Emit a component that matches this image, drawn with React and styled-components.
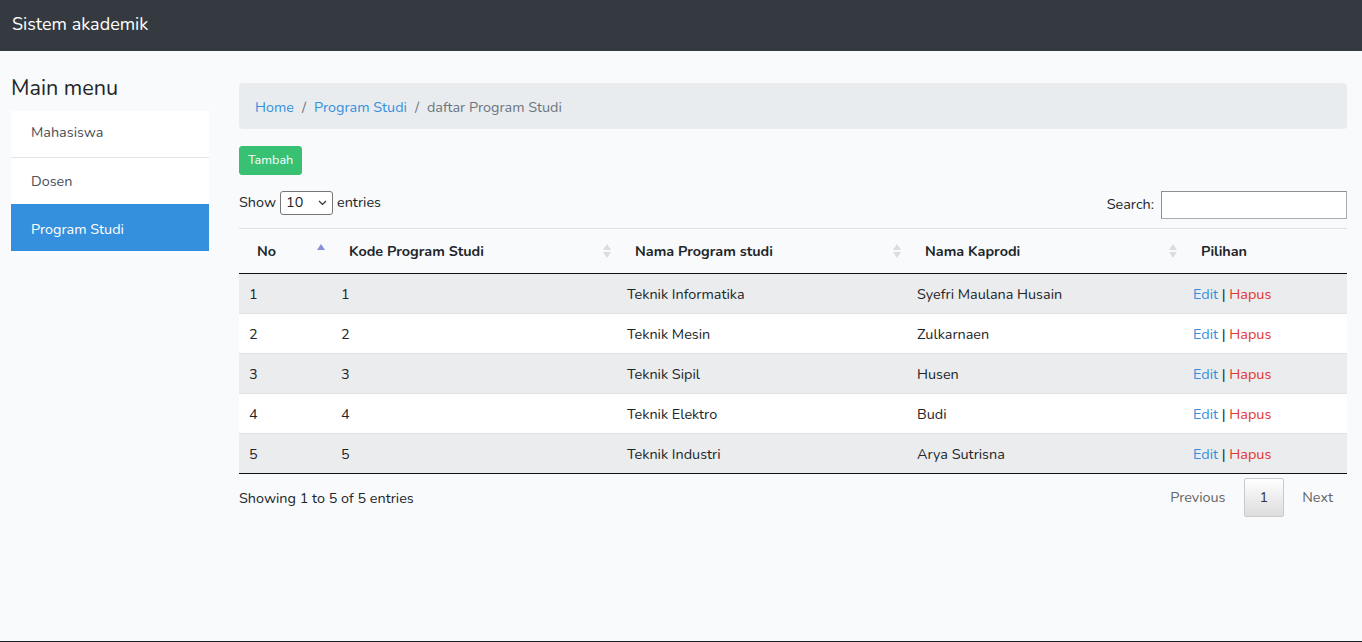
import React from "react";
import styled, { createGlobalStyle } from "styled-components";

const GlobalStyle = createGlobalStyle`
  html, body { margin: 0; padding: 0; }
  body {
    background: #f8fafc;
    font-family: "Nunito", "Lato", "Open Sans", sans-serif;
    font-size: 14.4px;
    line-height: 1.5;
    color: #212529;
  }
  * { box-sizing: border-box; }
`;

const Page = styled.div`
  min-height: 100vh;
  display: flex;
  flex-direction: column;
  border-bottom: 1px solid #1e2125;
`;

const Navbar = styled.nav`
  height: 51px;
  background: #343a40;
  display: flex;
  align-items: center;
  padding-left: 12px;
`;

const Brand = styled.span`
  color: #fff;
  font-size: 18px;
  line-height: 1;
  margin-top: -3px;
`;

const Body = styled.div`
  flex: 1;
  display: flex;
  padding: 24px 15px 0 11px;
  gap: 30px;
`;

const Sidebar = styled.aside`
  width: 198px;
  flex: none;
`;

const SideTitle = styled.h4`
  margin: 0 0 10px;
  font-size: 21.6px;
  font-weight: 400;
  line-height: 26px;
`;

const MenuList = styled.div`
  display: flex;
  flex-direction: column;
`;

const MenuItem = styled.a`
  display: block;
  height: 47px;
  padding: ${(p) => (p.$active ? "14px 20px 10px" : "13px 20px 11px")};
  line-height: 21.6px;
  text-decoration: none;
  background: ${(p) => (p.$active ? "#3490dc" : "#fff")};
  color: ${(p) => (p.$active ? "#fff" : "#495057")};
  border-top: 1px solid ${(p) => (p.$active ? "#3490dc" : "#e4e5e7")};
  &:first-child {
    border-top: none;
    height: 46px;
    padding-top: 11px;
  }
`;

const Content = styled.main`
  flex: 1;
  min-width: 0;
`;

const Breadcrumb = styled.ol`
  list-style: none;
  margin: 8px 0 17px;
  padding: 14px 16px 10px;
  height: 46px;
  background: #e9ecef;
  border-radius: 4px;
  display: flex;
  line-height: 21.6px;
`;

const Crumb = styled.li`
  color: ${(p) => (p.$active ? "#6c757d" : "#3490dc")};
  &:not(:first-child)::before {
    content: "/";
    color: #6c757d;
    padding: 0 8px;
  }
`;

const AddButton = styled.button`
  display: block;
  font-family: inherit;
  font-size: 12.6px;
  line-height: 1.5;
  padding: 4px 8px;
  height: 29px;
  color: #fff;
  background: #38c172;
  border: 1px solid #38c172;
  border-radius: 3px;
`;

const ControlsRow = styled.div`
  display: flex;
  justify-content: space-between;
  align-items: flex-start;
  margin-top: 16px;
  height: 37px;
`;

const Length = styled.label`
  display: flex;
  align-items: center;
  gap: 4px;
  height: 24px;
`;

const SelectBox = styled.span`
  position: relative;
  display: inline-flex;
  align-items: center;
  width: 53px;
  height: 24px;
  border: 1px solid #767676;
  border-radius: 3px;
  background: #fff;
  padding-left: 5px;
  font-size: 14.4px;
`;

const Caret = styled.svg`
  position: absolute;
  right: 5px;
  top: 8px;
`;

const Filter = styled.label`
  display: flex;
  align-items: center;
  gap: 7px;
  height: 28px;
`;

const SearchInput = styled.span`
  display: block;
  width: 186px;
  height: 28px;
  background: #fff;
  border: 1px solid #aaa;
  border-top-color: #8f8f8f;
  border-left-color: #8f8f8f;
`;

const Table = styled.table`
  width: 100%;
  border-collapse: collapse;
  table-layout: fixed;
  border-top: 1px solid #dee2e6;
  border-bottom: 1px solid #111;
`;

const Th = styled.th`
  position: relative;
  text-align: left;
  font-weight: 700;
  height: 45px;
  padding: 2px 18px 0;
  border-bottom: 1px solid #111;
  line-height: 21.6px;
  vertical-align: middle;
`;

const SortIcon = styled.svg`
  position: absolute;
  right: 5px;
  top: 14px;
`;

const Tr = styled.tr`
  background: ${(p) => (p.$striped ? "#ebeced" : "#fff")};
`;

const Td = styled.td`
  height: 40px;
  padding: 3px 10px 0;
  border-top: 1px solid #dee2e6;
  vertical-align: middle;
  line-height: 21.6px;
`;

const EditLink = styled.a`
  color: #3490dc;
  text-decoration: none;
`;

const DeleteLink = styled.a`
  color: #e3342f;
  text-decoration: none;
`;

const Footer = styled.div`
  display: flex;
  justify-content: space-between;
  align-items: flex-start;
  margin-top: 4px;
`;

const Info = styled.div`
  padding-top: 10px;
`;

const Pager = styled.div`
  display: flex;
  align-items: center;
  gap: 1px;
`;

const PageBtn = styled.span`
  display: inline-block;
  height: 39px;
  line-height: 21.6px;
  padding: 8px 16px;
  color: #666;
  border: 1px solid transparent;
  border-radius: 2px;
  &:last-child { padding-right: 13px; }
  ${(p) =>
    p.$current &&
    `
    color: #333;
    border-color: #cacaca;
    background: linear-gradient(to bottom, #fff 0%, #dcdcdc 100%);
    padding: 8px 15px;
  `}
`;

const SortBoth = () => (
  <SortIcon width="10" height="16" viewBox="0 0 10 16">
    <path d="M5 1 L9 7 L1 7 Z" fill="#dcdcdc" />
    <path d="M5 15 L9 9 L1 9 Z" fill="#dcdcdc" />
  </SortIcon>
);

const SortAsc = () => (
  <SortIcon width="10" height="16" viewBox="0 0 10 16">
    <path d="M5 1 L9 7 L1 7 Z" fill="#8a8fdc" />
  </SortIcon>
);

const columns = [
  { label: "No", width: 92, sort: "asc" },
  { label: "Kode Program Studi", width: 286, sort: "both" },
  { label: "Nama Program studi", width: 290, sort: "both" },
  { label: "Nama Kaprodi", width: 276, sort: "both" },
  { label: "Pilihan", width: 164, sort: null },
];

const rows = [
  ["1", "1", "Teknik Informatika", "Syefri Maulana Husain"],
  ["2", "2", "Teknik Mesin", "Zulkarnaen"],
  ["3", "3", "Teknik Sipil", "Husen"],
  ["4", "4", "Teknik Elektro", "Budi"],
  ["5", "5", "Teknik Industri", "Arya Sutrisna"],
];

export default function App() {
  return (
    <Page>
      <GlobalStyle />
      <Navbar>
        <Brand>Sistem akademik</Brand>
      </Navbar>
      <Body>
        <Sidebar>
          <SideTitle>Main menu</SideTitle>
          <MenuList>
            <MenuItem>Mahasiswa</MenuItem>
            <MenuItem>Dosen</MenuItem>
            <MenuItem $active>Program Studi</MenuItem>
          </MenuList>
        </Sidebar>
        <Content>
          <Breadcrumb>
            <Crumb>Home</Crumb>
            <Crumb>Program Studi</Crumb>
            <Crumb $active>daftar Program Studi</Crumb>
          </Breadcrumb>
          <AddButton>Tambah</AddButton>
          <ControlsRow>
            <Length>
              Show
              <SelectBox>
                10
                <Caret width="9" height="6" viewBox="0 0 9 6">
                  <path d="M1 1 L4.5 4.5 L8 1" fill="none" stroke="#333" strokeWidth="1.2" />
                </Caret>
              </SelectBox>
              entries
            </Length>
            <Filter>
              Search:
              <SearchInput />
            </Filter>
          </ControlsRow>
          <Table>
            <colgroup>
              {columns.map((c) => (
                <col key={c.label} style={{ width: c.width }} />
              ))}
            </colgroup>
            <thead>
              <tr>
                {columns.map((c) => (
                  <Th key={c.label}>
                    {c.label}
                    {c.sort === "asc" && <SortAsc />}
                    {c.sort === "both" && <SortBoth />}
                  </Th>
                ))}
              </tr>
            </thead>
            <tbody>
              {rows.map((r, i) => (
                <Tr key={r[0]} $striped={i % 2 === 0}>
                  <Td>{r[0]}</Td>
                  <Td>{r[1]}</Td>
                  <Td>{r[2]}</Td>
                  <Td>{r[3]}</Td>
                  <Td>
                    <EditLink>Edit</EditLink> | <DeleteLink>Hapus</DeleteLink>
                  </Td>
                </Tr>
              ))}
            </tbody>
          </Table>
          <Footer>
            <Info>Showing 1 to 5 of 5 entries</Info>
            <Pager>
              <PageBtn>Previous</PageBtn>
              <PageBtn $current>1</PageBtn>
              <PageBtn>Next</PageBtn>
            </Pager>
          </Footer>
        </Content>
      </Body>
    </Page>
  );
}
